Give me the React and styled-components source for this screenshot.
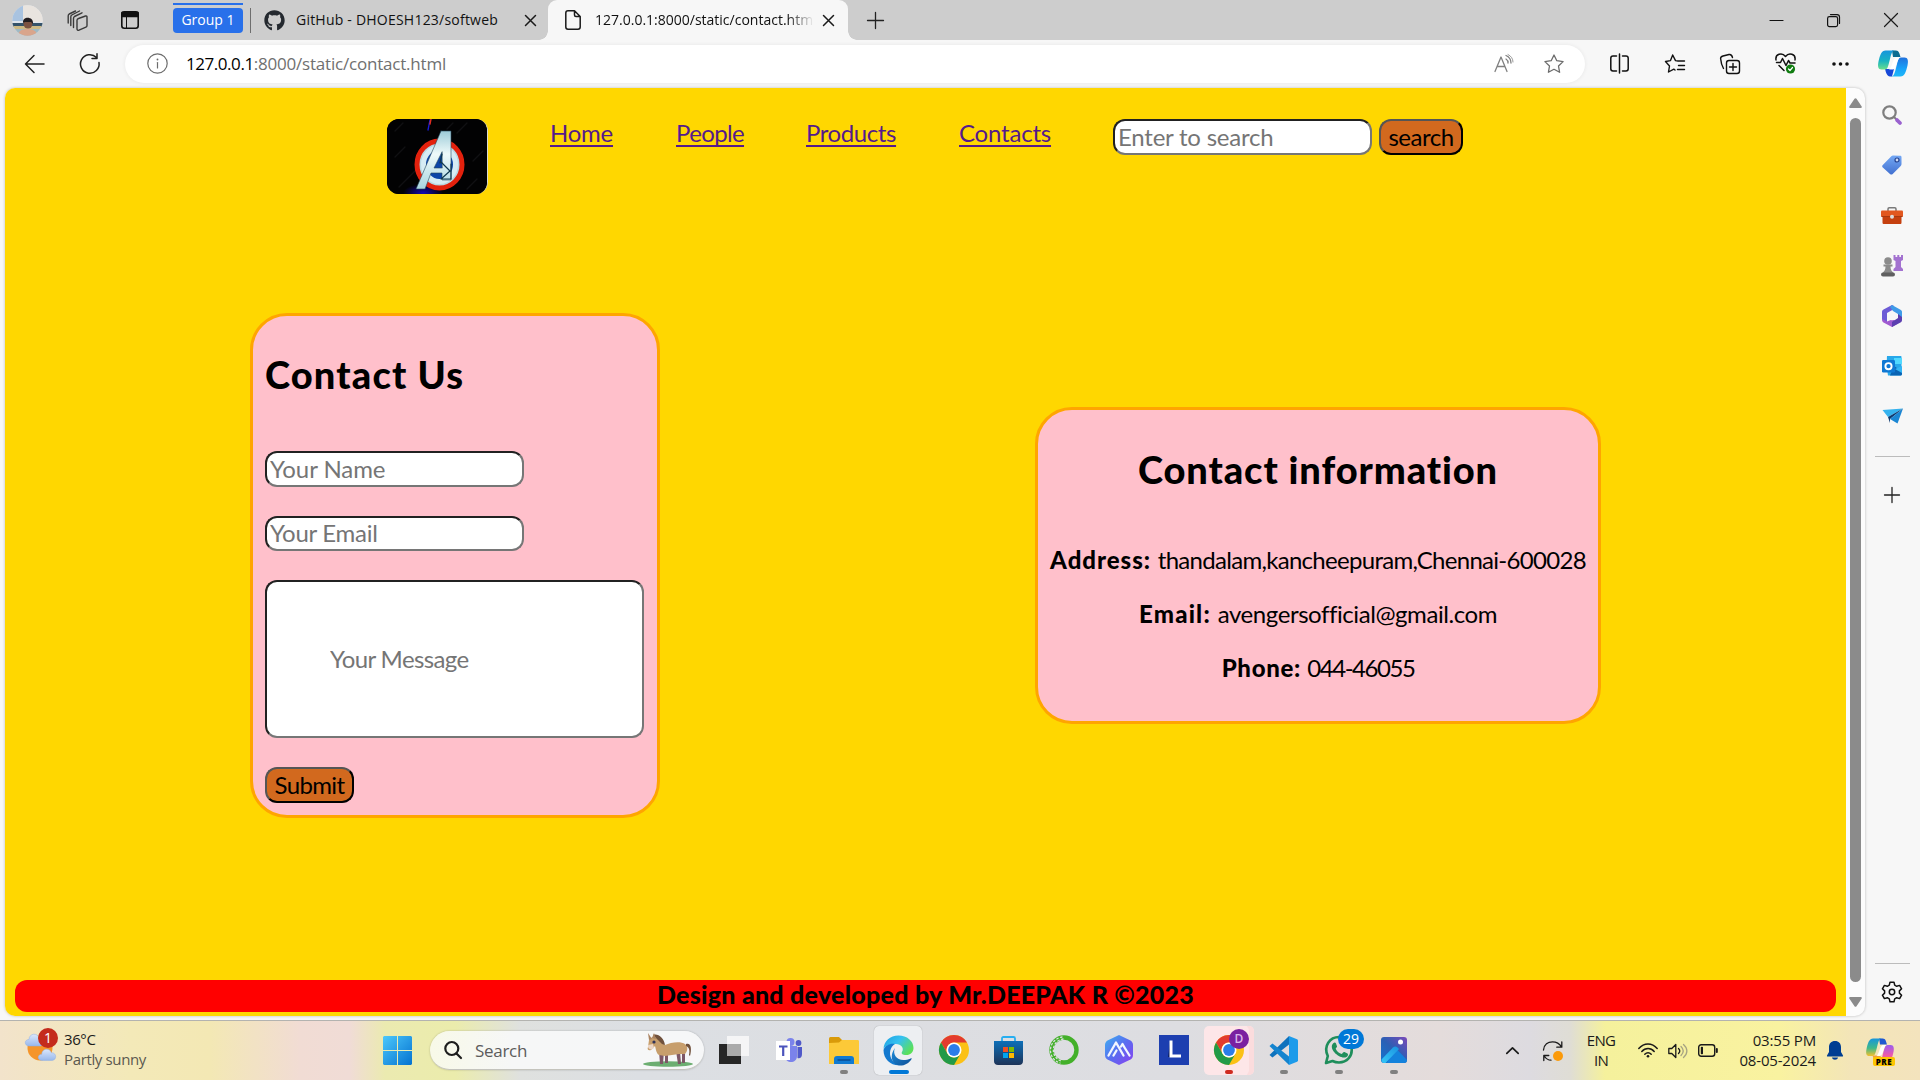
import React from "react";
import styled, { createGlobalStyle } from "styled-components";
import { FaGithub } from "react-icons/fa";

const GlobalStyle = createGlobalStyle`
  * { box-sizing: border-box; }
  html, body { margin: 0; padding: 0; overflow: hidden; }
  body { font-family: "Open Sans", "Noto Sans", sans-serif; background: #f7f7f7; }
`;

/* ---------- shared ---------- */
const Screen = styled.div`
  width: 1920px;
  height: 1080px;
  display: flex;
  flex-direction: column;
  background: #f7f7f7;
`;
const Svg = styled.svg`
  display: block;
  flex: none;
  overflow: visible;
  fill: none;
  stroke-linecap: round;
  stroke-linejoin: round;
  stroke: ${(p) => p.$ink || "none"};
  stroke-width: ${(p) => p.$line || 1.4}px;
  margin-left: ${(p) => p.$gap || 0}px;
`;
const Icon = ({ w, h = w, ink, line, gap, children }) => (
  <Svg width={w} height={h} viewBox={`0 0 ${w} ${h}`} $ink={ink} $line={line} $gap={gap}>
    {children}
  </Svg>
);

/* ---------- tab strip ---------- */
const TabStrip = styled.header`
  height: 40px;
  flex: none;
  display: flex;
  align-items: center;
  background: #cdcdcd;
  padding-left: 12px;
`;
const Group = styled.div`
  align-self: flex-start;
  margin: 3px 0 0 34px;
  width: 70px;
  height: 30px;
  border-top: 2px solid #2870ea;
  padding-top: 3px;
`;
const GroupLabel = styled.div`
  height: 25px;
  border-radius: 4px;
  background: #2870ea;
  color: #fff;
  font-size: 14px;
  line-height: 24px;
  text-align: center;
  white-space: nowrap;
`;
const Divider = styled.div`
  width: 1px;
  height: 25px;
  margin-left: 7px;
  background: #6e6e6e;
`;
const Tab = styled.div`
  display: flex;
  align-items: center;
  height: 40px;
  width: 297px;
  padding-left: 13px;
`;
const ActiveTab = styled.div`
  position: relative;
  display: flex;
  align-items: center;
  height: 40px;
  width: 300px;
  padding-left: 17px;
  background: #f7f7f7;
  border-radius: 9px 9px 0 0;
  &::before, &::after {
    content: "";
    position: absolute;
    bottom: 0;
    width: 9px;
    height: 9px;
  }
  &::before { left: -9px; background: radial-gradient(circle at 0 0, transparent 8.5px, #f7f7f7 9px); }
  &::after { right: -9px; background: radial-gradient(circle at 100% 0, transparent 8.5px, #f7f7f7 9px); }
`;
const TabTitle = styled.span`
  font-size: 14px;
  line-height: 20px;
  color: #111;
  white-space: nowrap;
  width: ${(p) => p.$w}px;
  margin-left: ${(p) => p.$gap}px;
  letter-spacing: ${(p) => p.$track || 0}px;
  ${(p) => p.$fade && "mask-image: linear-gradient(90deg, #000 88%, transparent);"}
`;
const WindowButtons = styled.div`
  display: flex;
  align-items: center;
  margin-left: auto;
  margin-right: 22px;
  gap: 44px;
`;

/* ---------- toolbar ---------- */
const Toolbar = styled.div`
  height: 48px;
  flex: none;
  display: flex;
  align-items: center;
  padding: 0 12px 1px 24px;
`;
const AddressBar = styled.div`
  display: flex;
  align-items: center;
  width: 1460px;
  height: 38px;
  margin-left: 25px;
  padding: 0 21px 0 22px;
  border-radius: 19px;
  background: #fff;
  box-shadow: 0 0 4px rgba(0, 0, 0, 0.07);
`;
const Url = styled.span`
  flex: 1;
  margin-left: 18px;
  font-size: 17px;
  letter-spacing: -0.2px;
  color: #707070;
  white-space: nowrap;
`;
const Host = styled.span`
  color: #000;
  letter-spacing: -0.45px;
`;

/* ---------- browser body ---------- */
const Body = styled.div`
  display: flex;
  height: 932px;
  flex: none;
  padding-left: 5px;
`;
const Viewport = styled.div`
  display: flex;
  width: 1860px;
  height: 928px;
  border-radius: 10px;
  overflow: hidden;
  background: #fcfcfc;
  box-shadow: 0 0 3px rgba(0, 0, 0, 0.25);
`;
const Page = styled.div`
  display: flex;
  flex-direction: column;
  width: 1841px;
  background: #ffd700;
  font-family: Lato, "Open Sans", sans-serif;
  font-size: 24px;
  line-height: 28px;
  color: #000;
`;
const ScrollTrack = styled.div`
  width: 19px;
  display: flex;
  flex-direction: column;
  align-items: center;
  justify-content: space-between;
  padding: 10px 0 9px;
`;
const ScrollThumb = styled.div`
  width: 11px;
  height: 864px;
  margin-bottom: 6px;
  border-radius: 6px;
  background: #8b8b8b;
`;

/* ---------- contact page ---------- */
const Nav = styled.nav`
  display: flex;
  align-items: flex-start;
  padding: 31px 0 0 382px;
  height: 106px;
  flex: none;
`;
const Logo = styled.div`
  width: 101px;
  height: 75px;
  border-radius: 12px;
  overflow: hidden;
  background: #020203;
  border-right: 1px solid #d8d8d0;
`;
const NavLink = styled.a`
  width: ${(p) => p.$w}px;
  margin-left: ${(p) => p.$gap}px;
  color: #551a8b;
  text-decoration: underline;
  text-decoration-thickness: 2px;
  text-underline-offset: 3px;
  text-decoration-skip-ink: none;
  letter-spacing: ${(p) => p.$track}px;
  white-space: nowrap;
`;
const Field = styled.input`
  display: block;
  width: 259px;
  height: ${(p) => p.$h || 36}px;
  margin: ${(p) => p.$margin || 0};
  padding: 0 3px 2px;
  border: 2px solid;
  border-color: #212121 #767676 #767676 #212121;
  border-radius: 12px;
  background: #fff;
  font: 24px Lato, sans-serif;
  letter-spacing: ${(p) => p.$track}px;
  outline: none;
  &::placeholder { color: #757575; opacity: 1; }
`;
const MessageField = styled(Field)`
  width: 379px;
  height: 158px;
  padding: 0 63px 2px;
`;
const ActionButton = styled.button`
  display: block;
  width: ${(p) => p.$w}px;
  height: 36px;
  margin: ${(p) => p.$margin};
  padding: 0 0 1px;
  border: 2px solid;
  border-color: #555 #000 #000 #555;
  border-radius: 12px;
  background: chocolate;
  color: #000;
  font: 24px Lato, sans-serif;
  letter-spacing: ${(p) => p.$track}px;
`;
const Cards = styled.main`
  display: flex;
  align-items: center;
  justify-content: space-between;
  height: 743px;
  flex: none;
  padding: 0 245px;
`;
const Card = styled.section`
  width: ${(p) => p.$w}px;
  padding: ${(p) => p.$pad};
  border: 3px solid orange;
  border-radius: 37px;
  background: pink;
  text-align: ${(p) => p.$align || "left"};
`;
const CardTitle = styled.h2`
  margin: 0 0 55px;
  font-size: 38px;
  line-height: 44px;
  font-weight: 900;
  letter-spacing: ${(p) => p.$track}px;
  white-space: nowrap;
`;
const Detail = styled.p`
  margin: 0 0 26px;
  line-height: 28px;
  white-space: nowrap;
  letter-spacing: ${(p) => p.$track}px;
  &:last-child { margin-bottom: 0; }
`;
const Strong = styled.strong`
  font-weight: 900;
  letter-spacing: ${(p) => p.$track}px;
`;
const Footer = styled.footer`
  margin: auto 10px 4px;
  height: 32px;
  border-radius: 12px;
  background: red;
  font-weight: 900;
  font-size: 25px;
  line-height: 29px;
  letter-spacing: 0.25px;
  text-align: center;
`;

/* ---------- edge sidebar ---------- */
const Sidebar = styled.aside`
  width: 54px;
  display: flex;
  flex-direction: column;
  align-items: center;
  padding: 2px 0 17px;
`;
const SideItem = styled.div`
  display: flex;
  align-items: center;
  justify-content: center;
  width: 54px;
  height: 50.2px;
`;
const SideRule = styled.div`
  width: 35px;
  height: 1px;
  margin: ${(p) => p.$margin};
  background: #bcbcbc;
`;

/* ---------- taskbar ---------- */
const Taskbar = styled.footer`
  height: 60px;
  flex: none;
  display: flex;
  align-items: center;
  border-top: 1px solid #b3b3b0;
  padding-left: 25px;
  background: linear-gradient(90deg, #f2e3cb 0, #f3e9b8 130px, #f3e8b4 210px, #f1dcd4 300px, #f0dcd6 350px,
    #ebeab0 385px, #ebecac 455px, #dfe1df 520px, #dcdfe3 640px, #dddde1 1180px, #e4dcdb 1440px, #dddbe0 1530px,
    #dfddd5 1570px, #f5f19c 1605px, #f9f2a0 1780px, #f3e5b8 1850px, #f3e3bd 1920px);
`;
const Weather = styled.div`
  display: flex;
  width: 358px;
  height: 60px;
`;
const WeatherText = styled.div`
  padding: 8px 0 0 7px;
  font-size: 15px;
  line-height: 20px;
  letter-spacing: -0.4px;
  color: #1b1b1b;
`;
const Muted = styled.div`
  color: #5b594f;
  letter-spacing: -0.36px;
`;
const WeatherIcon = styled.div`
  position: relative;
  padding-top: 12px;
`;
const Badge = styled.span`
  position: absolute;
  top: ${(p) => p.$top}px;
  right: ${(p) => p.$right}px;
  width: ${(p) => p.$size}px;
  height: 20px;
  border-radius: 12px;
  background: ${(p) => p.$bg};
  color: ${(p) => p.$color || "#fff"};
  font-size: ${(p) => p.$font || 14}px;
  font-weight: ${(p) => p.$weight || 400};
  line-height: 20px;
  text-align: center;
`;
const SearchBox = styled.div`
  display: flex;
  align-items: center;
  width: 274px;
  height: 39px;
  margin-left: 18px;
  padding: 0 11px 0 14px;
  border-radius: 20px;
  border-bottom: 1px solid #c4c4bd;
  background: linear-gradient(90deg, #f8f9e8, #f6f7f7 30%, #f6f7f8);
  box-shadow: 0 0 2px rgba(0, 0, 0, 0.25);
  color: #5c5c5c;
  font-size: 17px;
`;
const SearchText = styled.span`
  flex: 1;
  margin-left: 13px;
  letter-spacing: -0.3px;
`;
const Apps = styled.div`
  display: flex;
  margin-left: 2px;
`;
const AppSlot = styled.div`
  position: relative;
  display: flex;
  align-items: center;
  justify-content: center;
  width: 55px;
  height: 59px;
  padding-bottom: 1px;
  &::before {
    content: "";
    position: absolute;
    z-index: 0;
    inset: 5px ${(p) => (p.$hot ? "2px" : "4px")} 5px 3px;
    border-radius: 5px;
    background: ${(p) => p.$bg || "transparent"};
    box-shadow: ${(p) => (p.$bg ? "0 0 1px rgba(0,0,0,.35)" : "none")};
    ${(p) => p.$hot && "box-shadow: inset -6px 0 0 -1px #fbdcdd;"}
  }
  &::after {
    content: "";
    position: absolute;
    bottom: 6px;
    width: ${(p) => p.$dotW || 8}px;
    height: 4px;
    border-radius: 2px;
    background: ${(p) => p.$dot || "transparent"};
  }
  & > svg { position: relative; }
`;
const Tray = styled.div`
  display: flex;
  align-items: center;
  margin-left: auto;
  padding-right: 25px;
`;
const TrayText = styled.div`
  width: ${(p) => p.$w}px;
  margin: -2px 0 0 ${(p) => p.$gap}px;
  font-size: 15px;
  line-height: 20px;
  text-align: ${(p) => p.$align};
  letter-spacing: ${(p) => p.$track}px;
  color: #1b1b1b;
  white-space: nowrap;
`;

/* ---------- drawings ---------- */
const Avatar = () => (
  <Icon w={31} h={31}>
    <defs><clipPath id="av"><circle cx="15.5" cy="15.5" r="15.2" /></clipPath></defs>
    <g clipPath="url(#av)">
      <path fill="#dfe5ec" d="M0 0h31v31H0z" /><path fill="#a9c3e0" d="M0 0h11v16H0z" />
      <path fill="#e9e4df" d="M11 0h20v17H11z" /><path fill="#35536a" d="M0 18h31v4H0z" />
      <path fill="#cdb984" d="M0 21h31v3H0z" /><path fill="#9fb9c4" d="M0 24h31v7H0z" /><path fill="#d9a58c" d="M6 31c0-6 5-7 10-7s9 2 9 7z" />
      <circle cx="16" cy="19" r="4.500" fill="#7b5140" /><path fill="#221d20" d="M11 18c-1-7 11-7 10 1l-2-2h-6z" />
    </g>
  </Icon>
);
const Close = ({ s = 11, gap, line = 1.5 }) => (
  <Icon w={s} ink="#1a1a1a" line={line} gap={gap}><path d={`M.5.5l${s - 1} ${s - 1}M${s - 0.5}.5l-${s - 1} ${s - 1}`} /></Icon>
);
const Plus = ({ gap, s = 17 }) => (
  <Icon w={s} ink="#222" line={1.3} gap={gap}><path d={`M${s / 2} .5v${s - 1}M.5 ${s / 2}h${s - 1}`} /></Icon>
);
const AvengersLogo = () => (
  <Icon w={102} h={75}>
    <defs>
      <linearGradient id="alogo" x1="0" y1="0" x2="0" y2="1"><stop stopColor="#9ccbd8" /><stop offset=".4" stopColor="#effafa" /><stop offset="1" stopColor="#a9d5e0" /></linearGradient>
      <radialGradient id="glow"><stop stopColor="#1408b8" /><stop offset="1" stopColor="#020203" /></radialGradient>
    </defs>
    <path fill="#020203" d="M0 0h102v75H0z" />
    <ellipse cx="36" cy="74" rx="20" ry="9" fill="url(#glow)" />
    <path stroke="#1a1ad8" strokeWidth="1.3" d="M43 1l-2 10" /><path stroke="#e22c20" d="M44 0l-1 5" />
    <g stroke="#101013"><path d="M8 12l8-8M8 38l10-10M70 14l10-10M86 42l10-10M18 62l10-10M80 70l10-10M12 68l6-6M60 10l6-6" /></g>
    <ellipse cx="52.500" cy="45.500" rx="22.500" ry="23.500" fill="#b9d8e2" stroke="#e3210d" strokeWidth="5" />
    <ellipse cx="52.500" cy="45.500" rx="16" ry="17" fill="#0c45a8" stroke="#d6ecf4" strokeWidth="5" />
    <path fill="url(#alogo)" stroke="#26485a" strokeWidth=".6" d="M54 12h10v49h-9v-7H44l-6 16h-9L54 12zm1 21l-8 16h8z" />
    <path stroke="#10384f" strokeWidth="1.200" d="M54 43l9 9-9 8h10V45M55 35l-2 9" />
  </Icon>
);
const EdgeLogo = () => (
  <Icon w={31}>
    <defs>
      <linearGradient id="e1" x1="0" y1="0" x2="1" y2=".6"><stop stopColor="#1c9fe0" /><stop offset=".5" stopColor="#35c1f1" /><stop offset="1" stopColor="#5be05a" /></linearGradient>
      <linearGradient id="e2" x1="0" y1="0" x2="1" y2="1"><stop stopColor="#1c8ad8" /><stop offset="1" stopColor="#0d4f97" /></linearGradient>
    </defs>
    <path fill="url(#e1)" d="M.5 14C1 6 7 .5 15.500.5 24 .5 30.500 6 30.500 13c0 4.500-3.500 7-7 7-4.500 0-5.500-1.500-4.500-3 2.500-4-1-8-6-8C7 9 2 11 .5 14z" />
    <path fill="#1379cf" d="M.5 15C2 10.500 7 8 12 9c-5 3-6 9-4 14 2 4 5 6.500 9 7.300C8 31 .5 24.500.5 15z" />
    <path fill="url(#e2)" d="M12 13c-3 6 2 13 10 12 3-.3 5-1.300 6-1.800.5-.2.9.2.6.7C26 28 22 30.500 17 30.500 9 30 6 21 12 13z" />
  </Icon>
);
const ChromeLogo = () => (
  <Icon w={30}>
    <circle cx="15" cy="15" r="15" fill="#fbc116" />
    <path fill="#e33b2e" d="M2 7.500A15 15 0 0 1 28 7.500H15a7.500 7.500 0 0 0-6.500 11.250z" />
    <path fill="#229a48" d="M2 7.500a15 15 0 0 0 13 22.500l6.500-11.250A7.500 7.500 0 0 1 8.500 18.750z" />
    <circle cx="15" cy="15" r="7.500" fill="#fff" /><circle cx="15" cy="15" r="5.900" fill="#2b7de9" />
  </Icon>
);
const Copilot = ({ w, h, gap, pre }) => (
  <Svg width={w} height={h} viewBox="0 0 30 27" $gap={gap}>
    <defs>
      <linearGradient id={"ca" + w} x1="0" y1="0" x2="0" y2="1"><stop stopColor="#1795dc" /><stop offset=".55" stopColor={pre ? "#3fb98a" : "#19b3c2"} /><stop offset="1" stopColor={pre ? "#f5c02c" : "#69df8b"} /></linearGradient>
      <linearGradient id={"cb" + w} x1="0" y1="0" x2="0" y2="1"><stop stopColor={pre ? "#9a5cf0" : "#2171dc"} /><stop offset=".6" stopColor={pre ? "#ee5aa8" : "#16a3fa"} /><stop offset="1" stopColor={pre ? "#f7884d" : "#20b8f7"} /></linearGradient>
    </defs>
    <path fill={pre ? "#1e58d0" : "#0b6c92"} d="M14 .5h4c3 0 3.500 3 4.500 6.500H15z" />
    <path fill={pre ? "#f2a13a" : "#1748d8"} d="M7 19h9l-2 7.500h-2c-3 0-4-4-5-7.500z" />
    <path fill={`url(#ca${w})`} d="M7.500.5H17c-3 0-3.500 3-5 8.500s-2 10.500-5 10.500H3.500C0 19.500-.5 16 .5 11.500 2 5 3.500.5 7.500.5z" />
    <path fill={`url(#cb${w})`} d="M22.500 26.500H13c3 0 3.500-3 5-8.500s2-10.500 5-10.500h3.500c3.500 0 4 3.500 3 8-1.500 6.500-3 11-7 11z" />
    <path fill="#fff" d="M18 7.500h4c-3 1-3.500 11.500-7 12h-4c3-1 3.500-11 7-12z" opacity=".95" />
  </Svg>
);
const PreWrap = styled.div`
  position: relative;
  margin-left: 23px;
  width: 29px;
`;
const PreTag = styled.span`
  position: absolute;
  left: 7px;
  top: 19px;
  width: 22px;
  height: 9px;
  border-radius: 2px;
  background: #fdc500;
  font: 800 8px/9px "Open Sans", sans-serif;
  text-align: center;
  letter-spacing: 0.5px;
`;
const Cloud = ({ x, y, s = 1 }) => (
  <path transform={`translate(${x} ${y}) scale(${s})`} fill="url(#cl)" stroke="#8eaee6" strokeWidth=".5" d="M4 12C-1 12-1 5.500 4 5.500 4-1 13-1.500 14 4c6-.5 6 8 1 8z" />
);
const Donkey = () => (
  <Icon w={51} h={34}>
    <ellipse cx="26" cy="31" rx="25" ry="2.800" fill="#6cae71" />
    <path fill="#7d5766" d="M17 18h5l-1 13h-3zM23 20h3v10h-3zM34 18h4l1 13h-3zM40 18h3v12h-3z" />
    <path fill="#c79e6c" d="M7 7c2-4 8-4 10 0l6 5c6-3 16-4 20-1s2 8 0 10l-6 0-14 2-6-1c-3-2-3-6-4-9l-4 4c-3 1-4-1-3-3z" />
    <path fill="#70513c" d="M11 2c5-2 11 3 12 10l-3-1-6-6zM44 11c5-2 6 5 4 12l-1-1c1-5 0-8-3-9z" />
    <path fill="#a98260" d="M6 0l4 6-3 1zM12 0l2 6-4-1z" /><circle cx="12" cy="9" r="1.600" fill="#313458" />
    <path fill="#ecd6c5" d="M6 12l5-1 1 4c-2 2-5 2-6-1z" />
  </Icon>
);

const NAV = [["Home", 64, 62, -0.24], ["People", 69, 62, -0.64], ["Products", 90, 61, -0.41], ["Contacts", 92, 63, -0.2]];

const Tabs = () => (
  <TabStrip>
    <Avatar />
    <Icon w={21} gap={24} ink="#3a3a3a">
      <path d="M11.500 8.500l7-2.500c.9-.3 1.500.2 1.500 1v8.500c0 .8-.4 1.400-1.100 1.700l-6.900 3c-1 .4-2-.1-2-1.200v-8.800c0-.8.5-1.400 1.500-1.700zM6.500 17.500V8.500c0-.9.3-1.500 1-2L15 2.800M3.800 15.500V7c0-.9.3-1.500 1-2l7.700-4M1.200 13V6c0-.9.300-1.500 1-2L8.500 1" />
    </Icon>
    <Icon w={18} gap={33} ink="#111" line={1.6}>
      <rect x=".8" y=".8" width="16.400" height="16.400" rx="2.500" /><path fill="#111" d="M1 1.500h16v4H1z" /><path d="M5.500 5v12" strokeWidth="1" />
    </Icon>
    <Group><GroupLabel>Group 1</GroupLabel></Group>
    <Divider />
    <Tab>
      <FaGithub size={21} color="#24292f" />
      <TabTitle $w={210} $gap={11} $track={0.22}>GitHub - DHOESH123/softweb</TabTitle>
      <Close gap={19} />
    </Tab>
    <ActiveTab>
      <Icon w={16} h={20} ink="#1a1a1a" line={1.5}>
        <path d="M3 .8h6.500l5.700 5.700V17c0 1.300-.9 2.200-2.200 2.200H3C1.700 19.200.8 18.300.8 17V3C.8 1.700 1.700.8 3 .8zM9.500 1v4c0 1 .6 1.500 1.500 1.500h4" />
      </Icon>
      <TabTitle $w={219} $gap={14} $fade>127.0.0.1:8000/static/contact.htm</TabTitle>
      <Close gap={9} />
    </ActiveTab>
    <Plus gap={19} />
    <WindowButtons>
      <Icon w={13} ink="#111" line={1.2}><path d="M0 6.500h13" /></Icon>
      <Icon w={13} ink="#111" line={1.200}><rect x=".6" y="2.600" width="10" height="10" rx="1.800" /><path d="M3.500.6H10c1.500 0 2.500 1 2.500 2.500v6.400" /></Icon>
      <Close s={14} line={1.2} />
    </WindowButtons>
  </TabStrip>
);

const Tools = () => (
  <Toolbar>
    <Icon w={21} h={20} ink="#222" line={1.5}><path d="M20 10H1.500M10 1.500L1.500 10l8.500 8.500" /></Icon>
    <Icon w={21} gap={34} ink="#222" line={1.5}><path d="M17.500 4.500A9.300 9.300 0 1 0 20 9.500M18 .8v4.700h-5" /></Icon>
    <AddressBar>
      <Icon w={21} ink="#6c6c6c" line={1.200}><circle cx="10.500" cy="10.500" r="9.700" /><path d="M10.500 9.500v5.500" /><path d="M10.500 6.300v.2" strokeWidth="1.800" /></Icon>
      <Url><Host>127.0.0.1</Host>:8000/static/contact.html</Url>
      <Icon w={20} h={19} ink="#808080" line={1.3}><path d="M1 17.500L7 3l6 14.500M3 12.500h8M12 5c1.500 1 2.200 2.500 2 4M12 1.500c3.500 1.500 5 4 5 7.500" /><path d="M14 .5c3 1.500 5 4 5 7.500" strokeWidth=".8" /></Icon>
      <Icon w={20} gap={30} ink="#6c6c6c" line={1.300}><path d="M10 1l2.800 5.700 6.300.9-4.600 4.400 1.100 6.300L10 15.300l-5.600 3 1.100-6.300L.9 7.600l6.300-.9z" /></Icon>
    </AddressBar>
    <Icon w={19} gap={25} ink="#111" line={1.500}><path d="M6.500 2H3C1.600 2 .8 2.800.8 4.200v10.600c0 1.400.8 2.200 2.200 2.200h3.500M12.500 2H16c1.400 0 2.200.8 2.200 2.200v10.600c0 1.400-.8 2.200-2.200 2.200h-3.500M9.500 0v19" /></Icon>
    <Icon w={20} gap={36} ink="#111" line={1.400}><path d="M13 7l-2.500-.4L7.700 1 5.500 6.600l-5 .9 4 4.500-1 6 5.300-2.900L10 16M13 7h6.500M13.500 11.500h6M12.500 15.500h7" /></Icon>
    <Icon w={20} gap={35} ink="#111" line={1.400}><rect x="6.500" y="6.500" width="13" height="13" rx="2.500" /><path d="M13 9.500v7M9.500 13h7M3.500 14.500C1.500 11 .8 7 .6 4.500.5 3 1.500 2.500 3 2l6-1.500c1.500-.3 3 .6 3.500 3" /></Icon>
    <Icon w={21} gap={35} ink="#111" line={1.500}>
      <path d="M1 7C0 1 7-1 10.500 3.500 14-1 21 1 20 7M1.500 9.500h4l2-4 3.500 7 2.500-5 1.500 2.500h5M4 12.500l5 5" />
      <circle cx="15.500" cy="16" r="4.600" fill="#107c10" stroke="none" /><path stroke="#fff" strokeWidth="1.200" d="M13.500 16l1.500 1.500 2.500-3" />
    </Icon>
    <Icon w={17} h={4} gap={36}><g fill="#111"><circle cx="2" cy="2" r="1.800" /><circle cx="8.500" cy="2" r="1.800" /><circle cx="15" cy="2" r="1.800" /></g></Icon>
    <Copilot w={30} h={27} gap={29} />
  </Toolbar>
);

const ContactPage = () => (
  <Page>
    <Nav>
      <Logo><AvengersLogo /></Logo>
      {NAV.map(([t, w, gap, track]) => <NavLink key={t} $w={w} $gap={gap} $track={track}>{t}</NavLink>)}
      <Field placeholder="Enter to search" $track={-0.22} $margin="0 0 0 62px" />
      <ActionButton $w={84} $margin="0 0 0 7px" $track={-0.51}>search</ActionButton>
    </Nav>
    <Cards>
      <Card $w={410} $pad="36px 12px 12px">
        <CardTitle $track={1.15}>Contact Us</CardTitle>
        <Field placeholder="Your Name" $track={-0.06} />
        <Field placeholder="Your Email" $track={-0.28} $h={35} $margin="29px 0" />
        <MessageField placeholder="Your Message" $track={-0.62} />
        <ActionButton $w={89} $margin="29px 0 0" $track={-0.62}>Submit</ActionButton>
      </Card>
      <Card $w={566} $pad="37px 0 39px" $align="center">
        <CardTitle $track={0.9}>Contact information</CardTitle>
        <Detail $track={-0.7}><Strong $track={0.98}>Address: </Strong>thandalam,kancheepuram,Chennai-600028</Detail>
        <Detail $track={-0.43}><Strong $track={1.2}>Email: </Strong>avengersofficial@gmail.com</Detail>
        <Detail $track={-1.48}><Strong $track={0.68}>Phone: </Strong>044-46055</Detail>
      </Card>
    </Cards>
    <Footer>Design and developed by Mr.DEEPAK R ©2023</Footer>
  </Page>
);

const Side = () => (
  <Sidebar>
    <SideItem>
      <Icon w={20}><circle cx="7.500" cy="7.500" r="6.200" stroke="#7e7e7e" strokeWidth="2.200" /><path stroke="#7e7e7e" strokeWidth="2" d="M12 12l2 2" /><path stroke="#9a62cf" strokeWidth="3.800" d="M15 15l3 3" /></Icon>
    </SideItem>
    <SideItem>
      <Icon w={20}><defs><linearGradient id="tag" x1="0" y1="0" x2="0" y2="1"><stop stopColor="#74a8f4" /><stop offset="1" stopColor="#4270d0" /></linearGradient></defs>
        <path fill="url(#tag)" d="M11 .5l7 .2c1.200 0 1.500.5 1.500 1.500V9c0 .8-.2 1.300-.8 1.900l-8 8c-.9.900-1.800.9-2.700 0L.8 12.500c-.8-.8-.8-1.700 0-2.500l8.500-8.800c.5-.5 1-.7 1.700-.7z" /><circle cx="15" cy="5" r="2" fill="#cfdcf5" stroke="#24418f" strokeWidth="1.200" /></Icon>
    </SideItem>
    <SideItem>
      <Icon w={22} h={17}><path stroke="#7a7a7a" strokeWidth="1.500" d="M7 4V2c0-.8.5-1.200 1.200-1.200h5.600c.7 0 1.200.4 1.200 1.200v2" /><rect y="3.500" width="22" height="6.500" rx="1" fill="#e2571f" /><path fill="#c5400f" d="M1.500 10h19v5.500c0 1-.5 1.500-1.500 1.500H3c-1 0-1.500-.5-1.500-1.500z" /><path stroke="#8f2d0b" strokeWidth=".7" d="M1 9.500h20" /><circle cx="11" cy="9.800" r="2" fill="#ddd" /></Icon>
    </SideItem>
    <SideItem>
      <Icon w={22}><path fill="#a372d0" d="M12.500 0h2v2h1.800V0h2v2H20V0h2v5l-2 1v6l2 2v2h-9.500v-2l2-2V6l-2-1z" /><g fill="#8b8b8b"><circle cx="7" cy="6" r="3.800" /><path d="M2.500 9.500h9v2h-2c0 3 1 4.500 3 6.500h-11c2-2 3-3.500 3-6.500h-2z" /></g><rect y="17.500" width="14" height="4" rx="2" fill="#606060" /></Icon>
    </SideItem>
    <SideItem>
      <Icon w={20} h={22}><path fill="#6c5bd6" d="M10 0L1.500 4.500C.5 5 0 6 0 7v8l5 2.500V8l7-4V1z" /><path fill="#3f9be8" d="M10 0l8.500 4.800c1 .5 1.500 1.200 1.500 2.200v6l-4-2V9l-5-3-3-4z" /><path fill="#a05ad0" d="M0 14c0 2 .5 3 1.500 3.500L10 22l5-3v-3l-5-1.500-5 2z" /><path fill="#5c3fb0" d="M20 12v3c0 1-.5 2-1.500 2.500L10 22v-5l6-4V9z" /><circle cx="10" cy="11" r="4.200" fill="#f7f7f7" /></Icon>
    </SideItem>
    <SideItem>
      <Icon w={20}><path fill="#28a8ea" d="M5 0h13.500c.8 0 1 .5 1 1v17c0 1-.5 1.500-1.500 1.500H6L4.500 10z" /><path fill="#50d9ff" d="M12 2h8v6h-8z" /><path fill="#0a64b4" d="M12 10l8 5.500V18c0 1.200-.7 1.500-1.500 1.500H8z" /><path fill="#32b5f5" d="M20 10v7l-7-4z" /><rect y="4" width="13" height="12.500" rx="1.200" fill="#0f78d4" /><circle cx="6.500" cy="10.200" r="3.100" stroke="#fff" strokeWidth="1.900" /></Icon>
    </SideItem>
    <SideItem>
      <Icon w={21} h={16}><path fill="#35b2ee" d="M.5 2L21 .5 6 9z" /><path fill="#0e3a70" d="M6 9L21 .5 8 11v4z" /><path fill="#1b86d3" d="M21 .5L15.500 15.500 8 11z" /></Icon>
    </SideItem>
    <SideRule $margin="15px 0 30px" />
    <Plus s={16} />
    <SideRule $margin="auto 0 17px" />
    <Icon w={22}>
      <path stroke="#111" strokeWidth="1.500" d="M9 1.200h4l.7 3 2 1.100 2.900-.9 2 3.400-2.200 2.100v2.200l2.200 2.100-2 3.400-2.900-.9-2 1.100-.7 3H9l-.7-3-2-1.100-2.900.9-2-3.400 2.200-2.100V9.900L1.400 7.800l2-3.400 2.900.9 2-1.100z" /><circle cx="11" cy="11" r="2.700" stroke="#111" strokeWidth="1.500" />
    </Icon>
  </Sidebar>
);

const AppBar = () => (
  <Apps>
    <AppSlot><Icon w={30}><path fill="#262626" d="M0 9h22v20H0z" /><path fill="#fafafa" d="M8 1h22v20H8z" opacity=".82" /><path fill="#aaa" d="M8 9h14v12H8z" /></Icon></AppSlot>
    <AppSlot>
      <Icon w={26}><circle cx="14.500" cy="5" r="4" fill="#7b83eb" /><circle cx="22.500" cy="6" r="2.900" fill="#5059c9" /><path fill="#7b83eb" d="M9 9h12v10c0 8-12 8-12 0z" /><path fill="#5059c9" d="M21.500 10H26v7c0 4-2.500 5-4.500 4z" /><path fill="#fff" d="M0 4h14v19H0z" /><path stroke="#4b53bc" strokeWidth="2.200" strokeLinecap="butt" d="M3 9.500h8.500M7.200 9.500V19" /></Icon>
    </AppSlot>
    <AppSlot $dot="#808080"><Icon w={30} h={27}><path fill="#d99a09" d="M0 2C0 .8.5 0 1.500 0H10l3 3v4H0z" /><path fill="#fcc938" d="M0 6l10-.5L13 3h15.500C29.500 3 30 3.500 30 4.500V27H0z" /><path fill="#117ad1" d="M5 22c0-2 1-3 3-3h14c2 0 3 1 3 3v5H5z" /><path stroke="#0a4c91" strokeWidth="1.300" d="M9 23h12" /></Icon></AppSlot>
    <AppSlot $bg="#edeff2" $dot="#0078d7" $dotW={20}><EdgeLogo /></AppSlot>
    <AppSlot><ChromeLogo /></AppSlot>
    <AppSlot>
      <Icon w={29}><defs><linearGradient id="st" x1="0" y1="0" x2="0" y2="1"><stop stopColor="#0d6fb8" /><stop offset="1" stopColor="#1d3358" /></linearGradient></defs><path stroke="#27aef0" strokeWidth="1.800" d="M8 6V2.500C8 1.500 8.500 1 9.500 1h10c1 0 1.500.5 1.500 1.500V6" /><path fill="url(#st)" d="M0 5h29v20c0 2.500-1.500 4-4 4H4c-2.500 0-4-1.500-4-4z" /><path fill="#f25022" d="M9 11h5v5H9z" /><path fill="#7fba00" d="M15 11h5v5h-5z" /><path fill="#00a4ef" d="M9 17h5v5H9z" /><path fill="#ffb900" d="M15 17h5v5h-5z" /></Icon>
    </AppSlot>
    <AppSlot><Icon w={30}><circle cx="15" cy="15" r="12.500" stroke="#43b02a" strokeWidth="4.400" /><path stroke="#dcdee1" strokeWidth="1.300" strokeDasharray="1.500 2.500" d="M13 2C-2 5-2 24 11 28M14 4C2 6 1 22 12 26" /></Icon></AppSlot>
    <AppSlot>
      <Icon w={28} h={30}><defs><linearGradient id="hx" x1="0" y1="0" x2="1" y2="1"><stop stopColor="#3cb1f0" /><stop offset=".5" stopColor="#5a6cf0" /><stop offset="1" stopColor="#8a3ff0" /></linearGradient></defs><path fill="url(#hx)" d="M14 0l11.500 5.500C27 6.500 28 8 28 10v10c0 2-1 3.500-2.500 4.500L14 30 2.500 24.500C1 23.500 0 22 0 20V10c0-2 1-3.500 2.500-4.500z" /><path stroke="#f2f6ff" strokeWidth="2.300" d="M3.500 20.500l7.500-13 7.500 13M8.500 20.500l3-5M16 11.500l1.500-2.500 2 3.500M19.500 12.500l5 8" /></Icon>
    </AppSlot>
    <AppSlot><Icon w={30}><path fill="#1d3fb0" d="M0 0h30v30H0z" /><path fill="#0c1f63" d="M9 22l2-15v15z" /><path stroke="#fff" strokeWidth="3" strokeLinecap="butt" strokeLinejoin="miter" d="M12 5.500V21h10" /></Icon></AppSlot>
    <AppSlot $bg="#fde6e8" $hot $dot="#cf2b20"><ChromeLogo /><Badge $bg="#7a20a0" $size={20} $top={8} $right={7} $font={12} $weight={600} $color="#d9b6ea">D</Badge></AppSlot>
    <AppSlot $dot="#808080"><Icon w={29}><path fill="#1d9bea" d="M20 0l8 3.200c.7.300 1 .8 1 1.600v19.400c0 .8-.3 1.300-1 1.600L20 29z" /><path fill="#0e72bd" d="M20 0v8.500L3.500 21.500.500 19z" /><path fill="#1484cf" d="M20 29v-8.500L3.500 7.500.500 10z" /></Icon></AppSlot>
    <AppSlot $dot="#808080"><Icon w={30}><path stroke="#1f8e5b" strokeWidth="2.600" d="M2 28l1.800-7C-1 11 6 2 15 2c17 1 17 25 0 25.500-2.500 0-4.700-.6-6.500-1.500z" /><path fill="#1f8e5b" d="M9 8.500c1.500-1.500 2.500-1.200 3 0l1 2.800c.3 1-1.300 1.700-1.300 2.500 1.300 2.800 3.500 4.500 6 5.200 1-.5 1.500-2.500 2.800-2l3 1.500c1 .5.5 2.800-1 3.500C16 25 4 14 9 8.500z" /></Icon><Badge $bg="#0078d7" $size={26} $top={8} $right={2}>29</Badge></AppSlot>
    <AppSlot $dot="#808080"><Icon w={26}><defs><linearGradient id="ph" x1="0" y1="1" x2="1" y2="0"><stop stopColor="#1276d0" /><stop offset=".5" stopColor="#2b5fb4" /><stop offset="1" stopColor="#7c49b8" /></linearGradient><linearGradient id="mt" x1="0" y1="1" x2="1" y2="0"><stop stopColor="#35c8f8" /><stop offset="1" stopColor="#1b93e0" /></linearGradient></defs><rect width="26" height="26" rx="3" fill="url(#ph)" /><path fill="#1482dc" d="M12.500 14l3-2 10.500 11c0 2-1 3-3 3H6z" /><path fill="url(#mt)" d="M.5 22.500L12 10.500c1.500-1.500 3-1.500 4.500 0L18 12 4.500 26H3c-1.500 0-2.500-1.500-2.500-3.500z" /><circle cx="19.500" cy="5" r="2.500" fill="#fff" /></Icon></AppSlot>
  </Apps>
);

const System = () => (
  <Taskbar>
    <Weather>
      <WeatherIcon>
        <Icon w={32} h={29}>
          <defs><linearGradient id="cl" x1="0" y1="0" x2="0" y2="1"><stop stopColor="#dbe7fb" /><stop offset="1" stopColor="#98b8ec" /></linearGradient></defs>
          <circle cx="15" cy="15" r="12.500" fill="#f5952a" /><Cloud x={0} y={1} /><Cloud x={13} y={16} s={0.95} />
        </Icon>
        <Badge $bg="#c42b1c" $size={20} $top={7} $right={-1}>1</Badge>
      </WeatherIcon>
      <WeatherText>36°C<Muted>Partly sunny</Muted></WeatherText>
    </Weather>
    <Icon w={29}>
      <defs><linearGradient id="win" x1="0" y1="0" x2="1" y2="1"><stop stopColor="#4cc8fb" /><stop offset="1" stopColor="#0472d0" /></linearGradient></defs>
      <path fill="url(#win)" d="M1 0h13v14H0V1zM15 0h13l1 1v13H15zM0 15h14v14H1l-1-1zM15 15h14v13l-1 1H15z" />
    </Icon>
    <SearchBox>
      <Icon w={18} ink="#1d1d1d" line={2.200}><circle cx="7.800" cy="7.500" r="6.500" /><path d="M12.500 12.500l4.500 4.500" /></Icon>
      <SearchText>Search</SearchText>
      <Donkey />
    </SearchBox>
    <AppBar />
    <Tray>
      <Icon w={13} h={7} ink="#1a1a1a" line={1.700}><path d="M.8 6.300L6.500.8l5.700 5.500" /></Icon>
      <Icon w={20} gap={24} ink="#1a1a1a" line={1.300}><path d="M.5 9C1 3.500 5 .8 9.500.8c4 0 7 1.700 9 5M18.800.8v5.400h-5M8 19.200c-3 0-5-1.500-6.800-4.200M.8 19.500v-5h5" /><circle cx="15" cy="15" r="5" fill="#fb9a09" stroke="none" /></Icon>
      <TrayText $w={30} $gap={23} $align="center" $track={-0.7}>ENG<br />IN</TrayText>
      <Icon w={20} h={15} gap={22} ink="#1a1a1a" line={1.500}><path d="M.8 5.500C6-.5 14-.5 19.200 5.500M3.800 8.500c3.500-4 9-4 12.400 0M6.800 11.300c2-2 4.500-2 6.400 0" /><circle cx="10" cy="13.200" r="1.300" fill="#1a1a1a" stroke="none" /></Icon>
      <Icon w={20} h={16} gap={10} ink="#1a1a1a" line={1.300}><path d="M.8 5.500h3l4-4v13l-4-4h-3zM10.500 5.500c1.500 1.500 1.500 3.500 0 5" /><path stroke="#a6a383" d="M13 3.500c3 3 3 6 0 9M15.500 1.500c4.500 4 4.500 9 0 13" /></Icon>
      <Icon w={20} h={13} gap={10} ink="#1a1a1a" line={1.400}><rect x=".7" y=".7" width="16" height="11.600" rx="2.500" /><path fill="#1a1a1a" d="M3.500 3.500h.8v6h-.8z" /><path d="M18.800 5v3" strokeWidth="2" /></Icon>
      <TrayText $w={80} $gap={18} $align="right" $track={-0.17}>03:55 PM<br />08-05-2024</TrayText>
      <Icon w={16} h={19} gap={11}><path fill="#003e92" d="M8 0c3.800 0 6 2.600 6 6v5l2 3.500c.2.600 0 1-.6 1H.6c-.6 0-.8-.4-.6-1L2 11V6c0-3.400 2.200-6 6-6zM5 16.500h6c-.5 3-5.500 3-6 0z" /></Icon>
      <PreWrap><Copilot w={28} h={25} pre /><PreTag>PRE</PreTag></PreWrap>
    </Tray>
  </Taskbar>
);

export default function App() {
  return (
    <Screen>
      <GlobalStyle />
      <Tabs />
      <Tools />
      <Body>
        <Viewport>
          <ContactPage />
          <ScrollTrack>
            <Icon w={13} h={10}><path fill="#8b8b8b" d="M5.500.8c.5-.8 1.500-.8 2 0L12.700 8.500c.4.700 0 1.500-.8 1.500H1.100C.3 10-.1 9.200.3 8.500z" /></Icon>
            <ScrollThumb />
            <Icon w={13} h={10}><path fill="#8b8b8b" d="M5.500 9.200c.5.8 1.500.8 2 0L12.700 1.500c.4-.7 0-1.500-.8-1.500H1.100C.3 0-.1.800.3 1.500z" /></Icon>
          </ScrollTrack>
        </Viewport>
        <Side />
      </Body>
      <System />
    </Screen>
  );
}
